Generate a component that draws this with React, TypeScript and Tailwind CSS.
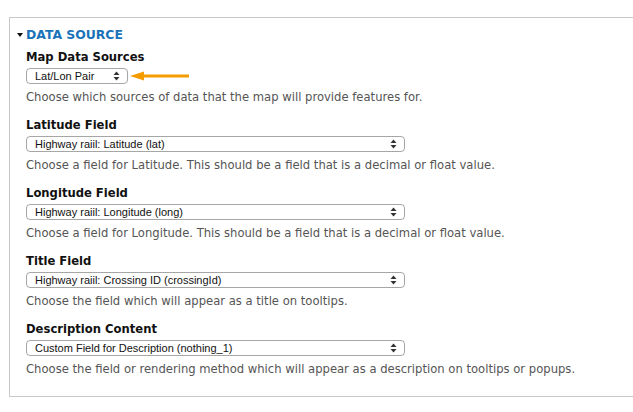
import React from 'react';

type Field = {
  label: string;
  value: string;
  help: string;
  short?: boolean;
};

const fields: Field[] = [
  {
    label: 'Map Data Sources',
    value: 'Lat/Lon Pair',
    help: 'Choose which sources of data that the map will provide features for.',
    short: true,
  },
  {
    label: 'Latitude Field',
    value: 'Highway raiil: Latitude (lat)',
    help: 'Choose a field for Latitude. This should be a field that is a decimal or float value.',
  },
  {
    label: 'Longitude Field',
    value: 'Highway raiil: Longitude (long)',
    help: 'Choose a field for Longitude. This should be a field that is a decimal or float value.',
  },
  {
    label: 'Title Field',
    value: 'Highway raiil: Crossing ID (crossingId)',
    help: 'Choose the field which will appear as a title on tooltips.',
  },
  {
    label: 'Description Content',
    value: 'Custom Field for Description (nothing_1)',
    help: 'Choose the field or rendering method which will appear as a description on tooltips or popups.',
  },
];

const SelectArrows = () => (
  <svg width="7" height="10" viewBox="0 0 7 10" className="shrink-0">
    <path d="M3.5 0.5 L6.5 4 H0.5 Z" fill="#333" />
    <path d="M3.5 9.5 L6.5 6 H0.5 Z" fill="#333" />
  </svg>
);

const FakeSelect = ({ value, short }: { value: string; short?: boolean }) => (
  <div
    className={`flex items-center justify-between h-[16px] rounded-[4px] border border-[#a6a6a6] bg-white pl-[8px] pr-[7px] ${
      short ? 'w-[102px]' : 'w-[379px]'
    }`}
  >
    <span className="text-[11px] leading-none text-[#111] font-['Liberation_Sans',Arial,sans-serif]">{value}</span>
    <SelectArrows />
  </div>
);

const OrangeArrow = () => (
  <svg width="62" height="10" viewBox="0 0 62 10" className="ml-[2px]">
    <path d="M0 5 L14 0.5 L14 9.5 Z" fill="#f59c00" />
    <rect x="12" y="3.5" width="47" height="3" fill="#f59c00" />
  </svg>
);

export default function App() {
  return (
    <div className="w-[633px] h-[412px] bg-white overflow-hidden pt-[17px] pl-[9px] font-['DejaVu_Sans',Verdana,sans-serif]">
      <div className="border border-r-0 border-[#c8c8c8] h-[380px] pl-[16px] pt-[9px]">
        <div className="flex items-center -ml-[9px] gap-[3px]">
          <svg width="6" height="4" viewBox="0 0 6 4">
            <path d="M0 0 H6 L3 4 Z" fill="#111" />
          </svg>
          <span className="text-[12.4px] font-bold text-[#1a73b9] leading-[16px]">DATA SOURCE</span>
        </div>
        <div className="flex flex-col">
          {fields.map((f, i) => (
            <div key={i} className="flex flex-col h-[68px] pt-[6px]">
              <div className="text-[11.6px] font-bold text-[#111] leading-[16px]">{f.label}</div>
              <div className="flex items-center mt-[3px]">
                <FakeSelect value={f.value} short={f.short} />
                {f.short && <OrangeArrow />}
              </div>
              <div className="text-[11.6px] text-[#555] leading-[16px] mt-[5px]">{f.help}</div>
            </div>
          ))}
        </div>
      </div>
    </div>
  );
}
